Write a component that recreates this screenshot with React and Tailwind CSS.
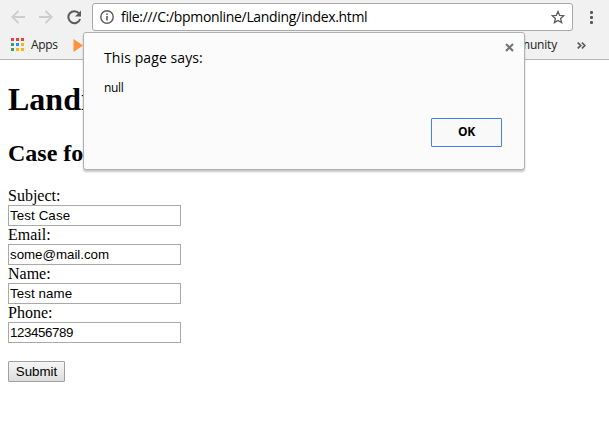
const fields = [
  ['Subject:', 'Test Case', 'tracking-[0.1px]'],
  ['Email:', 'some@mail.com', 'tracking-[-0.03px]'],
  ['Name:', 'Test name', 'tracking-[0.08px]'],
  ['Phone:', '123456789', 'tracking-[-0.41px]'],
];

const appColors = [
  '#ea4335', '#ea4335', '#ea4335',
  '#34a35a', '#2196f3', '#fbb40a',
  '#34a35a', '#fbb40a', '#fbb40a',
];

function Arrow({ flip }) {
  return (
    <svg width="14" height="14" viewBox="0 0 14 14" className={flip ? 'rotate-180' : ''} fill="none" stroke="#cdcdcd" strokeWidth="1.8">
      <path d="M14 7H1.5M7.5 .8L1.3 7l6.2 6.2" />
    </svg>
  );
}

function Toolbar() {
  return (
    <div className="flex h-[34px] items-center pl-[11px]">
      <Arrow />
      <div className="ml-[14px]"><Arrow flip /></div>
      <svg className="ml-[14px]" width="15" height="15" viewBox="0 0 15 15">
        <path d="M12.1 3.4A6 6 0 1 0 13.1 9" fill="none" stroke="#5a5a5a" strokeWidth="2" />
        <path d="M14 .5v6H8z" fill="#5a5a5a" />
      </svg>
      <div className="ml-[10px] flex h-7 w-[481px] items-center rounded-[3px] border border-[#a9a9a9] bg-white pl-[7px] pr-[7px]">
        <svg width="14" height="14" viewBox="0 0 14 14">
          <circle cx="7" cy="7" r="6.2" fill="none" stroke="#5a5a5a" strokeWidth="1.4" />
          <path d="M6.2 6h1.6v4.5H6.2zM6.2 3.4h1.6V5H6.2z" fill="#5a5a5a" />
        </svg>
        <span className="ml-[7px] text-[14px] leading-5 whitespace-nowrap tracking-[-0.32px]">file:///C:/bpmonline/Landing/index.html</span>
        <svg className="ml-auto" width="14" height="14" viewBox="0 0 14 14">
          <path d="M7 1.5l1.6 3.9 4.2.3-3.2 2.7 1 4.2L7 10.4l-3.6 2.2 1-4.2L1.2 5.7l4.2-.3z" fill="none" stroke="#5a5a5a" strokeWidth="1.3" />
        </svg>
      </div>
      <div className="ml-[17px] flex flex-col gap-[2px]">
        <i className="size-[3px] rounded-[1px] bg-[#5a5a5a]" />
        <i className="size-[3px] rounded-[1px] bg-[#5a5a5a]" />
        <i className="size-[3px] rounded-[1px] bg-[#5a5a5a]" />
      </div>
    </div>
  );
}

function Bookmarks() {
  return (
    <div className="flex h-[25px] items-center pl-[11px] pb-[3px] text-[12px] leading-4 text-[#222]">
      <div className="-mt-px grid grid-cols-3 gap-[2px]">
        {appColors.map((c, i) => <i key={i} className="size-[3px]" style={{ background: c }} />)}
      </div>
      <span className="ml-[7px] tracking-[-0.3px]">Apps</span>
      <svg className="ml-[15px]" width="10" height="13" viewBox="0 0 10 13"><path d="M.5 0L10 6.5.5 13z" fill="#ff923d" /></svg>
      <span className="ml-auto tracking-[-0.2px]">Community</span>
      <svg className="mr-[23px] ml-[20px]" width="9" height="7" viewBox="0 0 9 7" fill="none" stroke="#5a5a5a" strokeWidth="1.7">
        <path d="M.7.6l3 2.9-3 2.9M4.9.6l3 2.9-3 2.9" />
      </svg>
    </div>
  );
}

function Dialog() {
  return (
    <div className="absolute top-8 left-[83px] flex h-[138px] w-[442px] flex-col rounded-[3px] border border-[#b0b0b0] bg-[#fbfbfb] pl-5 shadow-[0_2px_2px_rgba(0,0,0,0.22)]">
      <div className="flex justify-between">
        <span className="mt-[15px] text-[14px] leading-5 tracking-[0.1px]">This page says:</span>
        <svg className="mt-[10px] mr-[10px]" width="9" height="9" viewBox="0 0 9 9" stroke="#747474" strokeWidth="2.1"><path d="M1 1l7 7M8 1L1 8" /></svg>
      </div>
      <span className="mt-3 text-[12px] leading-4 tracking-[-0.3px]">null</span>
      <button className="mt-[22px] mr-[22px] flex h-[29px] w-[71px] items-center justify-center self-end rounded-[1px] border border-[#4080e8] bg-[#f9f9f9] pb-px text-[12px] font-bold tracking-[-0.3px]">OK</button>
    </div>
  );
}

export default function App() {
  return (
    <div className="relative h-[429px] w-[609px] overflow-hidden bg-white font-['Open_Sans',sans-serif] text-black">
      <header className="h-[60px] border-b border-[#b5b5b5] bg-[#f1f1f1]">
        <Toolbar />
        <Bookmarks />
      </header>
      <main className="px-2 font-['Liberation_Serif',serif] text-[16px]">
        <h1 className="mt-[21px] text-[32px] leading-[37px] font-bold">Landi</h1>
        <h2 className="mt-[22px] text-[24px] leading-[27px] font-bold whitespace-nowrap">Case fo</h2>
        <form className="mt-5">
          {fields.map(([label, value, tracking]) => (
            <label key={label} className="block">
              <span className="block h-[18px] leading-[18px]">{label}</span>
              <input readOnly value={value} className={`block h-[21px] w-[173px] border border-[#a9a9a9] px-px font-['Liberation_Sans',sans-serif] text-[13.33px] ${tracking}`} />
            </label>
          ))}
          <button type="button" className="mt-[18px] block h-[21px] w-[57px] rounded-[1px] border border-[#a0a0a0] bg-linear-to-b from-[#f6f6f6] to-[#dddddd] font-['Liberation_Sans',sans-serif] text-[13.33px] leading-[18px]">Submit</button>
        </form>
      </main>
      <Dialog />
    </div>
  );
}
